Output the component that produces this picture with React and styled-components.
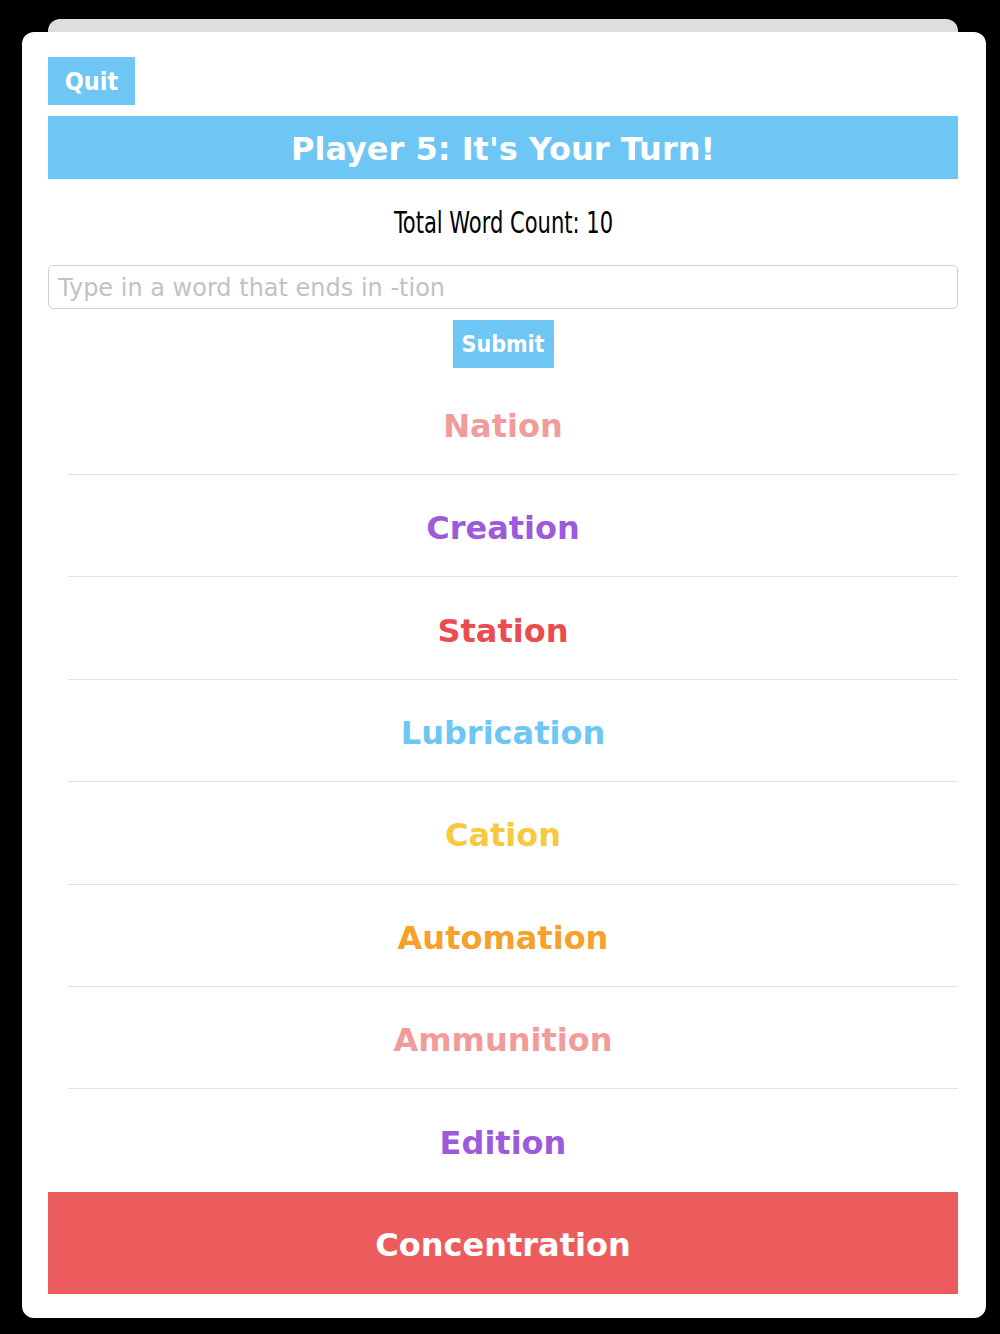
import React, { useState } from 'react';
import styled, { createGlobalStyle } from 'styled-components';

const GlobalStyle = createGlobalStyle`
    html, body {
        margin: 0;
        background: #000;
    }
    * {
        box-sizing: border-box;
    }
`;

const Page = styled.div`
    width: 1000px;
    height: 1334px;
    padding: 19px 14px 0 22px;
    background: #000;
`;

const BackCard = styled.div`
    height: 13px;
    margin: 0 28px 0 26px;
    background: #dedede;
    border-radius: 12px 12px 0 0;
`;

const Card = styled.div`
    height: 1286px;
    background: #fff;
    border-radius: 12px;
    padding: 25px 28px 0 26px;
    display: flex;
    flex-direction: column;
`;

const QuitButton = styled.button`
    align-self: flex-start;
    width: 87px;
    height: 48px;
    border: none;
    background: #6ec6f4;
    color: #fff;
    font-family: "DejaVu Sans Condensed", "DejaVu Sans", sans-serif;
    font-weight: bold;
    font-size: 25px;
    cursor: pointer;
    padding: 0;
`;

const Header = styled.div`
    margin-top: 11px;
    height: 63px;
    padding-top: 2px;
    background: #6ec6f4;
    color: #fff;
    display: flex;
    align-items: center;
    justify-content: center;
    font-family: "DejaVu Sans", sans-serif;
    font-weight: bold;
    font-size: 32px;
`;

const CountRow = styled.div`
    height: 86px;
    display: flex;
    align-items: center;
    justify-content: center;
`;

const CountText = styled.span`
    display: inline-block;
    font-family: "DejaVu Sans Condensed", "DejaVu Sans", sans-serif;
    font-size: 30px;
    color: #000;
    transform: scaleX(0.78);
`;

const WordInput = styled.input`
    height: 44px;
    width: 100%;
    border: 1px solid #cfcfcf;
    border-radius: 5px;
    padding: 2px 9px 0;
    font-family: "DejaVu Sans", sans-serif;
    font-size: 24px;
    color: #333;
    outline: none;

    &::placeholder {
        color: #c2c2c2;
    }
`;

const SubmitButton = styled.button`
    align-self: center;
    margin-top: 11px;
    width: 101px;
    height: 48px;
    border: none;
    padding: 0;
    background: #6ec6f4;
    color: #fff;
    font-family: "DejaVu Sans Condensed", "DejaVu Sans", sans-serif;
    font-weight: bold;
    font-size: 23px;
    cursor: pointer;
`;

const WordList = styled.ul`
    list-style: none;
    margin: 4.6px 0 0;
    padding: 0;
`;

const WordRow = styled.li`
    height: 102.4px;
    padding-top: 4px;
    display: flex;
    align-items: center;
    justify-content: center;
    font-family: "DejaVu Sans", sans-serif;
    font-weight: bold;
    font-size: 32px;
    color: ${p => (p.$active ? '#fff' : p.$color)};
    background: ${p => (p.$active
        ? '#ec5c5c'
        : p.$last
            ? 'transparent'
            : 'linear-gradient(#e2e2e2, #e2e2e2) no-repeat left 20px bottom / calc(100% - 20px) 1px')};
`;

const words = [
    { text: 'Nation', color: '#f29b9b' },
    { text: 'Creation', color: '#9b5bda' },
    { text: 'Station', color: '#eb4d4f' },
    { text: 'Lubrication', color: '#6ec6f4' },
    { text: 'Cation', color: '#f8c93f' },
    { text: 'Automation', color: '#f5a12b' },
    { text: 'Ammunition', color: '#f29b9b' },
    { text: 'Edition', color: '#9b5bda' },
    { text: 'Concentration', color: '#ec5c5c', active: true },
];

const App = () => {
    const [word, setWord] = useState('');

    return (
        <>
            <GlobalStyle />
            <Page>
                <BackCard />
                <Card>
                    <QuitButton>Quit</QuitButton>
                    <Header>Player 5: It's Your Turn!</Header>
                    <CountRow>
                        <CountText>Total Word Count: 10</CountText>
                    </CountRow>
                    <WordInput
                        placeholder="Type in a word that ends in -tion"
                        value={word}
                        onChange={(e) => setWord(e.target.value)}
                    />
                    <SubmitButton>Submit</SubmitButton>
                    <WordList>
                        {words.map((w, i) => (
                            <WordRow
                                key={w.text}
                                $color={w.color}
                                $active={w.active}
                                $last={i === words.length - 2}
                            >
                                {w.text}
                            </WordRow>
                        ))}
                    </WordList>
                </Card>
            </Page>
        </>
    )
}

export default App
